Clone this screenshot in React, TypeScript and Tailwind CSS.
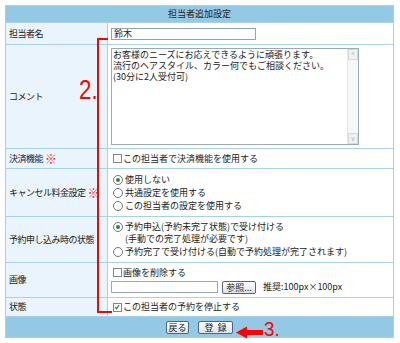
import React from "react";

const jp = "font-['Noto_Sans_CJK_JP',sans-serif]";

function Box({ checked = false }: { checked?: boolean }) {
  return (
    <span className="relative inline-block w-[9px] h-[9px] border border-[#7d8790] bg-[#fbfbfb] shrink-0 mr-[1px]">
      {checked && (
        <svg viewBox="0 0 9 9" className="absolute left-0 top-0 w-[7px] h-[7px]">
          <path d="M1.5 4 L3.2 6 L6.5 1.5" stroke="#1f9a1f" strokeWidth="1.6" fill="none" />
        </svg>
      )}
    </span>
  );
}

function Radio({ on = false }: { on?: boolean }) {
  return (
    <span className="inline-flex items-center justify-center w-[10px] h-[10px] rounded-full border border-[#6d7680] bg-white shrink-0 mr-[2px]">
      {on && <span className="w-[4px] h-[4px] rounded-full bg-[#2e8b2e]" />}
    </span>
  );
}

function Btn({ children, w }: { children: React.ReactNode; w: string }) {
  return (
    <span
      className={`${w} inline-flex items-center justify-center h-[13px] border border-[#4a6684] rounded-[2px] bg-gradient-to-b from-[#ffffff] to-[#dfe3e8] text-[9px] leading-none text-[#222]`}
    >
      {children}
    </span>
  );
}

function Row({
  label,
  mark,
  h,
  children,
  align = "items-center",
}: {
  label: string;
  mark?: boolean;
  h: string;
  children: React.ReactNode;
  align?: string;
}) {
  return (
    <div className={`flex ${h} border-b border-[#a7d1e8]`}>
      <div className="w-[102px] shrink-0 flex items-center pl-[3px] bg-[#eaf4fc] border-r border-[#a7d1e8]">
        <span className="tracking-[-0.5px]">{label}</span>
        {mark && <span className="ml-[2px] text-[12px] leading-none text-[#ff2020]">※</span>}
      </div>
      <div className={`flex-1 flex ${align} pl-[3px] bg-white`}>{children}</div>
    </div>
  );
}

export default function App() {
  return (
    <div className={`relative w-[400px] h-[343px] bg-white ${jp} text-[9px] leading-[12px] text-[#222]`}>
      <div className="ml-[5px] mt-[5px] w-[389px] border border-[#a7d1e8]">
        {/* header */}
        <div className="h-[17px] flex items-center justify-center bg-[#93c9e4] border-b border-[#a7d1e8]">
          担当者追加設定
        </div>

        <Row label="担当者名" h="h-[22px]">
          <div className="w-[145px] h-[12px] border border-[#8fa3b6] bg-white pl-[2px] leading-[10px]">鈴木</div>
        </Row>

        <Row label="コメント" h="h-[104px]" align="items-start">
          <div className="mt-[3px] w-[248px] h-[97px] border border-[#98a9ba] bg-white flex">
            <div className="flex-1 pl-[1px] leading-[11px]">
              <div>お客様のニーズにお応えできるように頑張ります。</div>
              <div>流行のヘアスタイル、カラー何でもご相談ください。</div>
              <div>(30分に2人受付可)</div>
            </div>
            <div className="w-[11px] flex flex-col justify-between bg-[#f6f7f8] border-l border-[#e3e6ea]">
              <div className="h-[11px] flex items-center justify-center border border-[#d6dade] bg-[#eef0f2] text-[7px] leading-none text-[#b0b6bc]">
                ^
              </div>
              <div className="h-[11px] flex items-center justify-center border border-[#d6dade] bg-[#eef0f2] text-[7px] leading-none text-[#b0b6bc]">
                v
              </div>
            </div>
          </div>
        </Row>

        <Row label="決済機能" mark h="h-[20px]">
          <div className="flex items-center pl-[2px]">
            <Box />
            この担当者で決済機能を使用する
          </div>
        </Row>

        <Row label="キャンセル料金設定" mark h="h-[48px]">
          <div className="flex flex-col pl-[2px] leading-[13px]">
            <div className="flex items-center">
              <Radio on />
              使用しない
            </div>
            <div className="flex items-center">
              <Radio />
              共通設定を使用する
            </div>
            <div className="flex items-center">
              <Radio />
              この担当者の設定を使用する
            </div>
          </div>
        </Row>

        <Row label="予約申し込み時の状態" h="h-[46px]">
          <div className="flex flex-col pl-[2px] leading-[12.5px]">
            <div className="flex items-center">
              <Radio on />
              予約申込(予約未完了状態)で受け付ける
            </div>
            <div className="pl-[12px]">(手動での完了処理が必要です)</div>
            <div className="flex items-center">
              <Radio />
              予約完了で受け付ける(自動で予約処理が完了されます)
            </div>
          </div>
        </Row>

        <Row label="画像" h="h-[35px]">
          <div className="flex flex-col gap-[2px]">
            <div className="flex items-center pl-[2px]">
              <Box />
              画像を削除する
            </div>
            <div className="flex items-center">
              <div className="w-[107px] h-[12px] border border-[#98a9ba] bg-white" />
              <span className="ml-[4px]">
                <Btn w="w-[34px]">参照...</Btn>
              </span>
              <span className="ml-[7px]">推奨:100px×100px</span>
            </div>
          </div>
        </Row>

        <Row label="状態" h="h-[19px]">
          <div className="flex items-center pl-[2px]">
            <Box checked />
            この担当者の予約を停止する
          </div>
        </Row>

        {/* footer */}
        <div className="h-[20px] flex items-center justify-center gap-[9px] bg-[#93c9e4]">
          <Btn w="w-[23px]">戻る</Btn>
          <Btn w="w-[35px]">登&nbsp;&nbsp;録</Btn>
        </div>
      </div>

      {/* annotations */}
      <div className="absolute left-[97px] top-[33px] w-[2px] h-[275px] bg-[#ff0000]" />
      <div className="absolute left-[97px] top-[33px] w-[11px] h-[2px] bg-[#ff0000]" />
      <div className="absolute left-[97px] top-[306px] w-[15px] h-[2px] bg-[#ff0000]" />
      <div className="absolute left-[79px] top-[71px] font-['Liberation_Sans',sans-serif] text-[28px] leading-[28px] text-[#ff0000] scale-x-[0.8] origin-left">
        2.
      </div>
      <svg className="absolute left-[236px] top-[321px]" width="28" height="13" viewBox="0 0 28 13">
        <path d="M0 6.5 L11 0.5 L11 4 L27 4 L27 9 L11 9 L11 12.5 Z" fill="#ff0000" />
      </svg>
      <div className="absolute left-[264px] top-[313px] font-['Liberation_Sans',sans-serif] text-[21px] leading-[21px] text-[#ff0000] scale-x-[0.9] origin-left">
        3.
      </div>
    </div>
  );
}
